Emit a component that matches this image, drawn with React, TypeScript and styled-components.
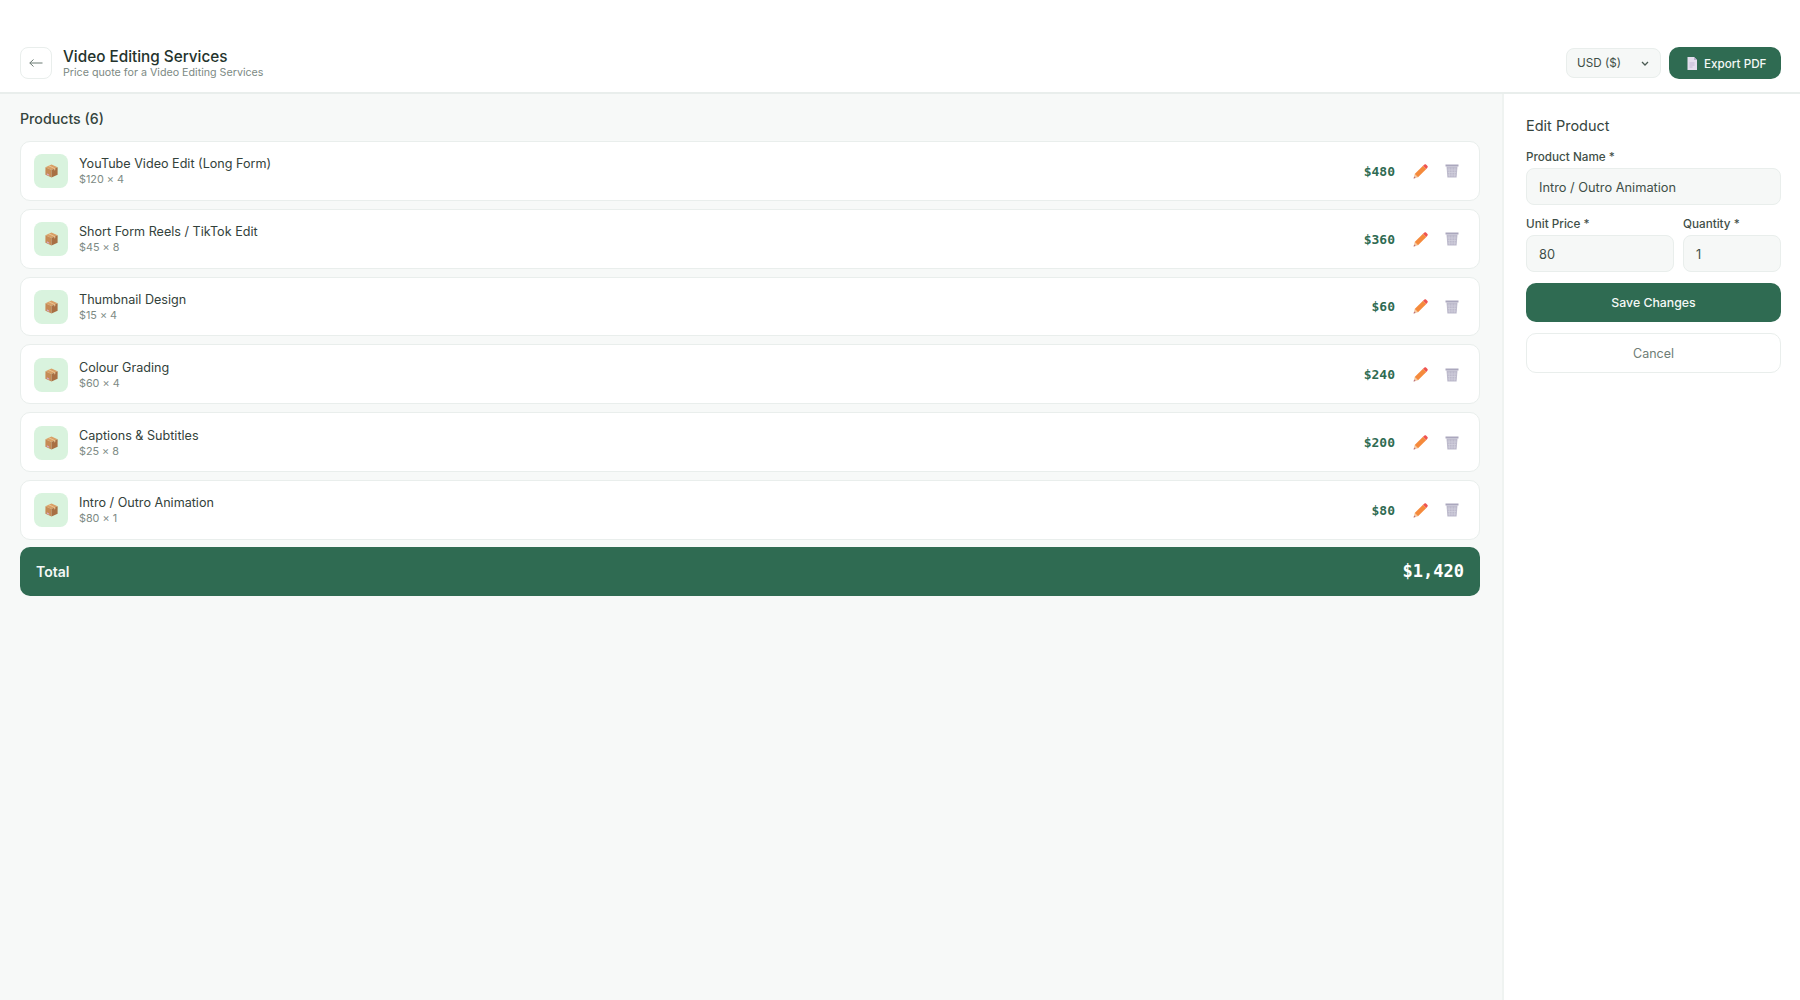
import React from 'react';
import styled, { createGlobalStyle } from 'styled-components';

const green = '#2f6b52';
const ink = '#2a3a33';
const line = '#e9eeec';

const products = [
  { id: 'a', name: 'YouTube Video Edit (Long Form)', detail: '$120 × 4', total: '$480' },
  { id: 'b', name: 'Short Form Reels / TikTok Edit', detail: '$45 × 8', total: '$360' },
  { id: 'c', name: 'Thumbnail Design', detail: '$15 × 4', total: '$60' },
  { id: 'd', name: 'Colour Grading', detail: '$60 × 4', total: '$240' },
  { id: 'e', name: 'Captions & Subtitles', detail: '$25 × 8', total: '$200' },
  { id: 'f', name: 'Intro / Outro Animation', detail: '$80 × 1', total: '$80' },
];

const BoxIcon = () => (
  <svg width="15" height="16" viewBox="0 0 16 16">
    <path d="M8 1 14.5 4 8 7 1.500 4Z" fill="#d9a066" />
    <path d="M1.500 4 8 7V15L1.500 12Z" fill="#c68a55" />
    <path d="M14.500 4 8 7V15L14.500 12Z" fill="#a86f43" />
    <path d="M4.500 2.600 11 5.700V7.500L12 7V5.200L5.500 2.100Z" fill="#eccb9c" />
    <path d="M3 10.500 5.500 11.600V13L3 11.900Z" fill="#d7a9c4" />
  </svg>
);

const PencilIcon = () => (
  <svg width="15" height="15" viewBox="0 0 15 15">
    <path d="M.6 14.400 1.700 10 5 13.300Z" fill="#f4c9a0" />
    <path d="M.6 14.400 1.100 12.400 2.600 13.900Z" fill="#b36a7e" />
    <path d="M1.700 10 10 1.700 13.300 5 5 13.300Z" fill="#f58a3c" />
    <path d="M10 1.700 11.500.5C12 .1 12.600.1 13 .5L14.500 2C14.900 2.400 14.900 3 14.500 3.500L13.300 5Z" fill="#ef5350" />
  </svg>
);

const TrashIcon = () => (
  <svg width="14" height="14" viewBox="0 0 14 14">
    <path d="M.5 .5H13.500V2.500H.5Z" fill="#aaa7bd" />
    <path d="M1.500 2.500H12.500L11.600 13.500H2.400Z" fill="#bcb9cb" />
    <path d="M4 3.500 4.500 12.500M7 3.500V12.500M10 3.500 9.500 12.500M2.500 6H11.500M2.800 8.500H11.200M3 11H11" stroke="#d3d1de" strokeWidth=".7" fill="none" />
  </svg>
);

const DocIcon = () => (
  <svg width="12" height="13" viewBox="0 0 12 13">
    <path d="M1.500 0H8L11 3V13H1.500Z" fill="#e4deee" />
    <path d="M8 0 11 3H8Z" fill="#b9aecd" />
    <path d="M3.500 6H8.500M3.500 8H8.500M3.500 10H6.500" stroke="#b9aecd" strokeWidth=".8" />
  </svg>
);

export default function App() {
  return (
    <Page>
      <GlobalStyle />
      <Header>
        <HeaderLeft>
          <BackButton>
            <svg width="14" height="10" viewBox="0 0 14 10" fill="none" stroke="#6b7a73" strokeWidth="1">
              <path d="M13.500 5H.8M4.500 1.500.8 5 4.500 8.500" />
            </svg>
          </BackButton>
          <TitleBlock>
            <Title>Video Editing Services</Title>
            <Subtitle>Price quote for a Video Editing Services</Subtitle>
          </TitleBlock>
        </HeaderLeft>
        <HeaderRight>
          <CurrencySelect>
            USD ($)
            <svg width="8" height="5" viewBox="0 0 8 5" fill="none" stroke="#4a5a53" strokeWidth="1.300">
              <path d="M1 1 4 4 7 1" />
            </svg>
          </CurrencySelect>
          <ExportButton>
            <DocIcon />
            Export PDF
          </ExportButton>
        </HeaderRight>
      </Header>

      <Body>
        <Main>
          <SectionTitle>Products (6)</SectionTitle>
          <List>
            {products.map((p) => (
              <Row key={p.id}>
                <Thumb>
                  <BoxIcon />
                </Thumb>
                <RowText>
                  <RowName>{p.name}</RowName>
                  <RowDetail>{p.detail}</RowDetail>
                </RowText>
                <RowPrice>{p.total}</RowPrice>
                <IconSlot $gap={18}>
                  <PencilIcon />
                </IconSlot>
                <IconSlot $gap={17}>
                  <TrashIcon />
                </IconSlot>
              </Row>
            ))}
          </List>
          <TotalBar>
            <TotalLabel>Total</TotalLabel>
            <TotalValue>$1,420</TotalValue>
          </TotalBar>
        </Main>

        <Side>
          <SideTitle>Edit Product</SideTitle>
          <Field>
            <Label>Product Name *</Label>
            <Input>Intro / Outro Animation</Input>
          </Field>
          <FieldRow>
            <Field>
              <Label>Unit Price *</Label>
              <Input>80</Input>
            </Field>
            <Field>
              <Label>Quantity *</Label>
              <Input>1</Input>
            </Field>
          </FieldRow>
          <SaveButton>Save Changes</SaveButton>
          <CancelButton>Cancel</CancelButton>
        </Side>
      </Body>
    </Page>
  );
}

const GlobalStyle = createGlobalStyle`
  html, body, #root {
    height: 100%;
    margin: 0;
  }

  body {
    font-family: Inter, "Noto Sans", sans-serif;
    color: ${ink};
  }

  * {
    box-sizing: border-box;
  }
`;

const Page = styled.div`
  display: flex;
  flex-flow: column;
  height: 100%;
  background: #fff;
`;

const Header = styled.header`
  display: flex;
  flex-shrink: 0;
  align-items: center;
  justify-content: space-between;
  height: 94px;
  padding: 47px 19px 13px 20px;
  background: #fff;
  border-bottom: 2px solid ${line};
`;

const HeaderLeft = styled.div`
  display: flex;
  align-items: center;
  gap: 11px;
`;

const HeaderRight = styled.div`
  display: flex;
  align-items: center;
  gap: 8px;
`;

const BackButton = styled.div`
  display: flex;
  align-items: center;
  justify-content: center;
  width: 32px;
  height: 32px;
  border: 1px solid ${line};
  border-radius: 8px;
`;

const TitleBlock = styled.div`
  padding-top: 2px;
`;

const Title = styled.div`
  font-size: 15.300px;
  line-height: 18px;
  font-weight: 500;
  color: #24332c;
`;

const Subtitle = styled.div`
  font-size: 10.700px;
  line-height: 14px;
  color: #7d8a84;
`;

const CurrencySelect = styled.div`
  display: flex;
  align-items: center;
  justify-content: space-between;
  width: 95px;
  height: 30px;
  padding: 0 11px 0 10px;
  font-size: 11.700px;
  color: #3f4f48;
  background: #f6f8f7;
  border: 1px solid ${line};
  border-radius: 8px;
`;

const ExportButton = styled.div`
  display: flex;
  align-items: center;
  gap: 6px;
  width: 112px;
  height: 32px;
  padding: 1px 0 0 17px;
  font-size: 11.700px;
  font-weight: 500;
  color: #f4f8f6;
  background: ${green};
  border-radius: 10px;
`;

const Body = styled.div`
  display: flex;
  flex: 1;
  min-height: 0;
`;

const Main = styled.main`
  flex: 1;
  padding: 15px 22px 0 20px;
  background: #f7f9f8;
`;

const SectionTitle = styled.div`
  margin-bottom: 12px;
  font-size: 14.200px;
  line-height: 20px;
  font-weight: 500;
  color: #35443d;
`;

const List = styled.div`
  display: flex;
  flex-flow: column;
  gap: 8px;
`;

const Row = styled.div`
  display: flex;
  align-items: center;
  height: 59.800px;
  padding: 1px 20px 0 13px;
  background: #fff;
  border: 1px solid ${line};
  border-radius: 10px;
`;

const Thumb = styled.div`
  display: flex;
  align-items: center;
  justify-content: center;
  width: 34px;
  height: 34px;
  margin-right: 11px;
  background: #d9f3de;
  border-radius: 8px;
`;

const RowText = styled.div`
  flex: 1;
  padding-top: 1px;
`;

const RowName = styled.div`
  font-size: 12.600px;
  line-height: 17px;
  color: #33423b;
`;

const RowDetail = styled.div`
  font-size: 10.800px;
  line-height: 16px;
  color: #7d8a84;
`;

const RowPrice = styled.div`
  font-family: "DejaVu Sans Mono", monospace;
  font-size: 13px;
  font-weight: 700;
  color: ${green};
`;

const IconSlot = styled.div<{ $gap: number }>`
  display: flex;
  margin-left: ${(p) => p.$gap}px;
`;

const TotalBar = styled.div`
  display: flex;
  align-items: center;
  justify-content: space-between;
  height: 49px;
  margin-top: 7px;
  padding: 0 16px 0 16px;
  background: ${green};
  border-radius: 10px;
`;

const TotalLabel = styled.div`
  font-size: 14px;
  font-weight: 600;
  color: #f4f8f6;
`;

const TotalValue = styled.div`
  font-family: "DejaVu Sans Mono", monospace;
  font-size: 17px;
  font-weight: 700;
  color: #fff;
`;

const Side = styled.aside`
  display: flex;
  flex-flow: column;
  flex-shrink: 0;
  width: 298px;
  padding: 22px 19px 0 22px;
  background: #fff;
  border-left: 2px solid #eff3f1;
`;

const SideTitle = styled.div`
  margin-bottom: 13px;
  font-size: 14.500px;
  line-height: 20px;
  color: #35443d;
`;

const Field = styled.div`
  display: flex;
  flex-flow: column;
  gap: 3px;
`;

const FieldRow = styled.div`
  display: grid;
  grid-template-columns: 148px 98px;
  gap: 9px;
  margin-top: 11px;
`;

const Label = styled.div`
  font-size: 11.700px;
  line-height: 16px;
  font-weight: 500;
  color: #3f4f48;
`;

const Input = styled.div`
  display: flex;
  align-items: center;
  height: 37px;
  padding: 1px 12px 0;
  font-size: 12.800px;
  color: #3f4f48;
  background: #f6f8f7;
  border: 1px solid ${line};
  border-radius: 8px;
`;

const SaveButton = styled.div`
  display: flex;
  align-items: center;
  justify-content: center;
  height: 39px;
  margin-top: 11px;
  font-size: 12.300px;
  font-weight: 500;
  color: #f4f8f6;
  background: ${green};
  border-radius: 10px;
`;

const CancelButton = styled.div`
  display: flex;
  align-items: center;
  justify-content: center;
  height: 40px;
  margin-top: 11px;
  font-size: 12.500px;
  color: #6f7d76;
  border: 1px solid ${line};
  border-radius: 10px;
`;
